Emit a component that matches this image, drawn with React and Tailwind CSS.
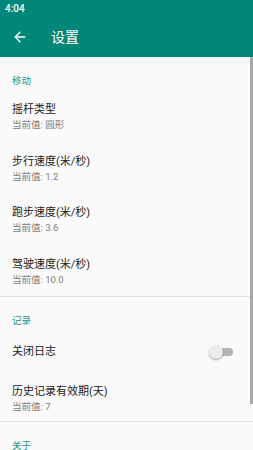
import React from 'react';
import { ArrowLeft } from 'lucide-react';

const font = { fontFamily: 'Roboto, "Noto Sans CJK SC", sans-serif' };

const Category = ({ title }) => (
    <div className="px-3 pt-[18px]">
        <div className="text-[9.5px] leading-[12px] text-[#1a9585]">{title}</div>
    </div>
);

const Item = ({ title, value }) => (
    <div className="px-3 pt-[14px] pb-[6.5px]">
        <div className="text-[11px] leading-[17px] text-[#212121]">{title}</div>
        <div className="text-[9.5px] leading-[14px] text-[#7a7a7a]">当前值: {value}</div>
    </div>
);

const Divider = ({ className }) => <div className={`h-px bg-[#e4e4e4] ${className}`} />;

export default function App() {
    return (
        <div className="relative w-[253px] h-[450px] overflow-hidden bg-[#fafafa]" style={font}>
            <header className="bg-[#00877a] h-[57px] flex flex-col">
                <div className="h-[17px] flex items-center px-[5px]">
                    <span className="text-[10px] font-medium text-white">4:04</span>
                </div>
                <div className="flex-1 flex items-center">
                    <div className="w-[51px] flex items-center pl-[12px]">
                        <ArrowLeft size={16} color="white" strokeWidth={2.2} />
                    </div>
                    <span className="text-[14px] text-white">设置</span>
                </div>
            </header>

            <Category title="移动" />
            <Item title="摇杆类型" value="圆形" />
            <Item title="步行速度(米/秒)" value="1.2" />
            <Item title="跑步速度(米/秒)" value="3.6" />
            <Item title="驾驶速度(米/秒)" value="10.0" />
            <Divider className="mt-[3px]" />

            <Category title="记录" />
            <div className="px-3 pt-4 pb-[7px] flex items-center justify-between">
                <div className="text-[11px] leading-[17px] text-[#212121]">关闭日志</div>
                <div className="relative w-[24px] h-[14px] mr-[8px] flex items-center">
                    <div className="absolute left-[8px] right-0 h-[8px] rounded-full bg-[#b3b3b3]" />
                    <div className="absolute left-0 w-[14px] h-[14px] rounded-full bg-[#ececec] shadow-[0_1px_2px_rgba(0,0,0,0.35)]" />
                </div>
            </div>
            <div className="px-3 pt-[16px] pb-[4.5px]">
                <div className="text-[11px] leading-[17px] text-[#212121]">历史记录有效期(天)</div>
                <div className="text-[9.5px] leading-[14px] text-[#7a7a7a]">当前值: 7</div>
            </div>
            <Divider className="mt-[2px]" />

            <Category title="关于" />

            <div className="absolute right-0 top-[57px] w-[3px] h-[347px] bg-[#a8a8a8]" />
        </div>
    );
}
